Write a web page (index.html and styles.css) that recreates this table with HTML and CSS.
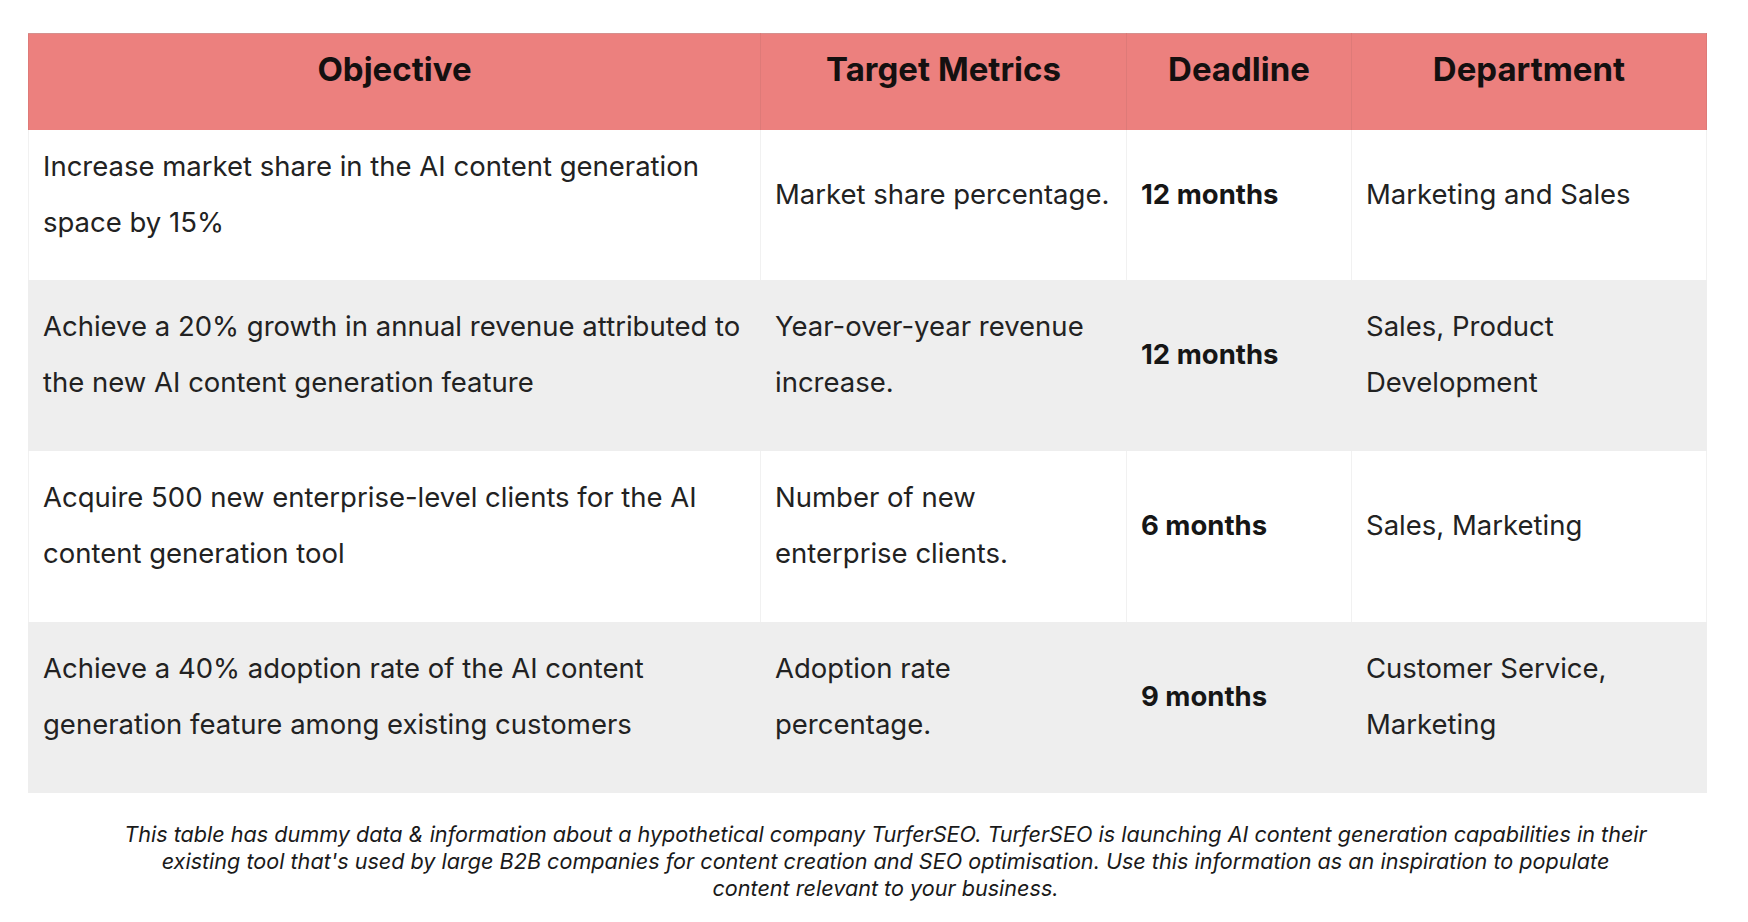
FILE: index.html
```html
<!DOCTYPE html>
<html lang="en">
<head>
<meta charset="utf-8">
<title>TurferSEO Objectives</title>
<link rel="stylesheet" href="styles.css">
</head>
<body>
<div class="page">
  <table class="okr">
    <colgroup>
      <col class="c-obj">
      <col class="c-met">
      <col class="c-dead">
      <col class="c-dept">
    </colgroup>
    <thead>
      <tr>
        <th>Objective</th>
        <th>Target Metrics</th>
        <th>Deadline</th>
        <th>Department</th>
      </tr>
    </thead>
    <tbody>
      <tr class="first">
        <td>Increase market share in the AI content generation space by 15%</td>
        <td>Market share percentage.</td>
        <td class="strong">12 months</td>
        <td>Marketing and Sales</td>
      </tr>
      <tr class="alt">
        <td>Achieve a 20% growth in annual revenue attributed to the new AI content generation feature</td>
        <td>Year-over-year revenue increase.</td>
        <td class="strong">12 months</td>
        <td>Sales, Product Development</td>
      </tr>
      <tr>
        <td>Acquire 500 new enterprise-level clients for the AI content generation tool</td>
        <td>Number of new enterprise clients.</td>
        <td class="strong">6 months</td>
        <td>Sales, Marketing</td>
      </tr>
      <tr class="alt">
        <td>Achieve a 40% adoption rate of the AI content generation feature among existing customers</td>
        <td>Adoption rate percentage.</td>
        <td class="strong">9 months</td>
        <td>Customer Service, Marketing</td>
      </tr>
    </tbody>
  </table>
  <p class="note">This table has dummy data &amp; information about a hypothetical company TurferSEO. TurferSEO is launching AI content generation capabilities in their existing tool that's used by large B2B companies for content creation and SEO optimisation. Use this information as an inspiration to populate content relevant to your business.</p>
</div>
</body>
</html>
```

FILE: styles.css
```css
html, body {
  margin: 0;
  padding: 0;
  background: #ffffff;
}

.page {
  padding: 33px 42px 0 28px;
  font-family: Inter, "Noto Sans", sans-serif;
  color: #1f1f1f;
}

.okr {
  width: 1678px;
  border-collapse: collapse;
  table-layout: fixed;
}

.c-obj { width: 732px; }
.c-met { width: 366px; }
.c-dead { width: 225px; }
.c-dept { width: 355px; }

.okr th {
  background: #ec807e;
  color: #141010;
  font-size: 33px;
  font-weight: 700;
  line-height: 56px;
  text-align: center;
  padding: 7px 14px 33px;
  border-top: 1px solid #d4908e;
  border-left: 1px solid #de7a78;
  border-right: 1px solid #de7a78;
}

.okr td {
  font-size: 27.5px;
  line-height: 56px;
  color: #222222;
  vertical-align: middle;
  padding: 18px 16px 41px 14px;
  border-left: 1px solid #f1f1f1;
  border-right: 1px solid #f1f1f1;
}

.okr tr.first td {
  padding-top: 8px;
  padding-bottom: 30px;
}

.okr tr.alt td {
  background: #eeeeee;
  border-color: #eeeeee;
}

.okr td.strong {
  font-weight: 700;
  color: #161616;
}

.note {
  width: 1525px;
  margin: 28px 0 0 95px;
  text-align: center;
  font-style: italic;
  font-size: 21.6px;
  line-height: 27px;
  color: #1a1a1a;
}
```
